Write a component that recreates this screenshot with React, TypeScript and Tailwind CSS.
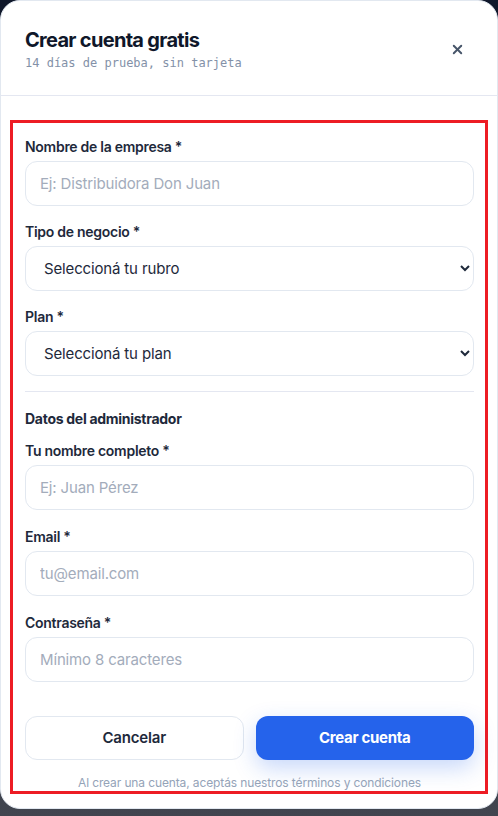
import { X } from "lucide-react";

const font = { fontFamily: "Inter, 'Noto Sans', sans-serif" };

function Field({ label, children }: { label: string; children: React.ReactNode }) {
  return (
    <div>
      <label className="block text-[14px] font-semibold leading-5 tracking-[-0.02em] text-[#1e293b] mb-1">{label}</label>
      {children}
    </div>
  );
}

function TextInput({ placeholder, type = "text" }: { placeholder: string; type?: string }) {
  return (
    <input
      type={type}
      placeholder={placeholder}
      className="block w-full h-[45px] rounded-[12px] border border-[#e2e8f0] bg-white px-[14px] text-[15px] tracking-[-0.01em] text-[#1e293b] placeholder:text-[#a3acbb] outline-none"
    />
  );
}

function Select({ placeholder }: { placeholder: string }) {
  return (
    <select
      defaultValue=""
      className="block w-full h-[45px] rounded-[12px] border border-[#e2e8f0] bg-white pl-[14px] pr-1 text-[15px] tracking-[-0.01em] text-[#1e293b] outline-none"
    >
      <option value="" disabled>
        {placeholder}
      </option>
    </select>
  );
}

export default function App() {
  return (
    <div className="min-h-[816px] bg-gradient-to-b from-[#0f172a] to-[#41454f]" style={font}>
      <div className="bg-white rounded-[20px] border border-[#e2e8f0] w-full">
        <header className="flex items-center justify-between px-6 pt-[25px] pb-[23px] border-b border-[#e4e7f1]">
          <div>
            <h2 className="text-[20px] leading-7 font-bold tracking-[-0.035em] text-[#0f172a]">Crear cuenta gratis</h2>
            <p className="text-[12px] leading-[18px] text-[#8391a8]" style={{ fontFamily: "'DejaVu Sans Mono', 'Liberation Mono', monospace" }}>
              14 días de prueba, sin tarjeta
            </p>
          </div>
          <button className="w-8 h-8 flex items-center justify-center text-[#475569]">
            <X size={15} strokeWidth={3} />
          </button>
        </header>

        <div className="mx-[9px] mt-6 mb-[14px] border-[3px] border-[#ed1c24] pl-3 pr-[11px] pt-[14px]">
          <div className="space-y-4">
            <Field label="Nombre de la empresa *">
              <TextInput placeholder="Ej: Distribuidora Don Juan" />
            </Field>
            <Field label="Tipo de negocio *">
              <Select placeholder="Seleccioná tu rubro" />
            </Field>
            <Field label="Plan *">
              <Select placeholder="Seleccioná tu plan" />
            </Field>
          </div>

          <div className="mt-[15px] border-t border-[#e4e7f1]" />

          <p className="mt-[17px] text-[14px] leading-5 font-bold tracking-[-0.02em] text-[#1e293b]">Datos del administrador</p>

          <div className="mt-3 space-y-[17px]">
            <Field label="Tu nombre completo *">
              <TextInput placeholder="Ej: Juan Pérez" />
            </Field>
            <Field label="Email *">
              <TextInput placeholder="tu@email.com" type="email" />
            </Field>
            <Field label="Contraseña *">
              <TextInput placeholder="Mínimo 8 caracteres" type="password" />
            </Field>
          </div>

          <div className="mt-[34px] grid grid-cols-2 gap-3">
            <button className="h-[44px] rounded-[12px] border border-[#e2e8f0] bg-white text-[15px] font-semibold tracking-[-0.01em] text-[#1e293b]">
              Cancelar
            </button>
            <button className="h-[44px] rounded-[12px] bg-[#2563eb] text-[15px] font-bold tracking-[-0.02em] text-white shadow-[0_8px_22px_rgba(37,99,235,0.25)]">
              Crear cuenta
            </button>
          </div>

          <p className="mt-[15px] text-center text-[12px] leading-4 tracking-[-0.01em] text-[#94a3b8]">
            Al crear una cuenta, aceptás nuestros términos y condiciones
          </p>
        </div>
      </div>
    </div>
  );
}
